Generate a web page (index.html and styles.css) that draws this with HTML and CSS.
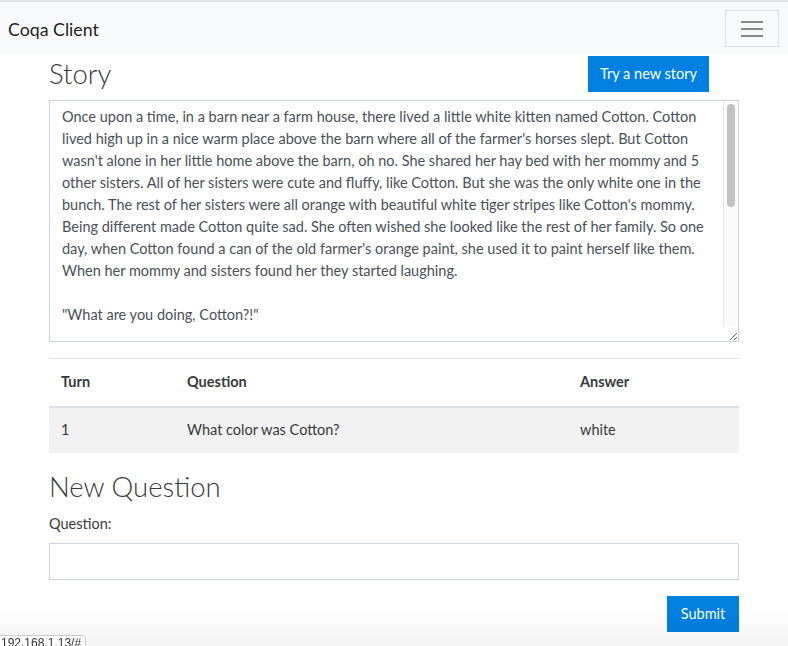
FILE: index.html
```html
<!DOCTYPE html>
<html lang="en">
<head>
<meta charset="utf-8">
<title>Coqa Client</title>
<link rel="stylesheet" href="styles.css">
</head>
<body>
<nav class="navbar">
  <span class="brand">Coqa Client</span>
  <button class="toggler" type="button" aria-label="Toggle navigation">
    <svg width="24" height="18" viewBox="0 0 24 18"><path d="M1 2h22M1 9h22M1 16h22" stroke="#888" stroke-width="2"/></svg>
  </button>
</nav>
<main class="container">
  <div class="story-head">
    <h2 class="heading">Story</h2>
    <button class="btn btn-new" type="button">Try a new story</button>
  </div>
  <div class="story-wrap">
    <textarea class="story" rows="10">Once upon a time, in a barn near a farm house, there lived a little white kitten named Cotton. Cotton lived high up in a nice warm place above the barn where all of the farmer's horses slept. But Cotton wasn't alone in her little home above the barn, oh no. She shared her hay bed with her mommy and 5 other sisters. All of her sisters were cute and fluffy, like Cotton. But she was the only white one in the bunch. The rest of her sisters were all orange with beautiful white tiger stripes like Cotton's mommy. Being different made Cotton quite sad. She often wished she looked like the rest of her family. So one day, when Cotton found a can of the old farmer's orange paint, she used it to paint herself like them. When her mommy and sisters found her they started laughing.

"What are you doing, Cotton?!"

"I only wanted to be more like you".

Cotton's mommy rubbed her face on Cotton's and said "Oh Cotton, but your fur is so pretty and special, like you. We would never want you to be any other way". And with that, Cotton's mommy picked her up and dropped her into a big bucket of water. When Cotton came out she was herself again. Her sisters licked her face until Cotton's fur was all all dry.

"Don't ever do that again, Cotton!" they all cried. "Next time you might mess up that pretty white fur of yours and we wouldn't want that!"

Then Cotton thought, "I change my mind. I like being special".</textarea>
    <div class="scrollbar" aria-hidden="true"><div class="thumb"></div></div>
  </div>
  <table class="qa">
    <thead>
      <tr><th class="c-turn">Turn</th><th class="c-q">Question</th><th>Answer</th></tr>
    </thead>
    <tbody>
      <tr><td>1</td><td>What color was Cotton?</td><td>white</td></tr>
    </tbody>
  </table>
  <h2 class="heading heading-q">New Question</h2>
  <form class="ask">
    <label class="label" for="q">Question:</label>
    <input id="q" class="input" type="text">
    <div class="actions"><button class="btn btn-submit" type="button">Submit</button></div>
  </form>
</main>
<div class="fade"></div>
<div class="status">192.168.1.13/#</div>
</body>
</html>
```
FILE: styles.css
```css
* { box-sizing: border-box; }
html, body { margin: 0; }
body {
  font-family: "Lato", "Noto Sans", sans-serif;
  font-size: 14.5px;
  line-height: 22.5px;
  color: #373a3c;
  background: #fff;
}
.navbar {
  display: flex;
  align-items: center;
  justify-content: space-between;
  background: #f8f9fa;
  border-top: 2px solid #e2e2e2;
  padding: 8px 9px 8px 8px;
}
.brand {
  font-size: 17.75px;
  color: rgba(0,0,0,.9);
  line-height: 28px;
}
.toggler {
  width: 54px;
  height: 37px;
  border: 1px solid #dedfe0;
  background: transparent;
  display: flex;
  align-items: center;
  justify-content: center;
  padding: 0;
}
.container {
  width: 690px;
  margin: 0 auto;
}
.story-head {
  display: flex;
  align-items: center;
  justify-content: space-between;
  padding-top: 1px;
  margin-bottom: 8px;
}
.heading {
  font-size: 27.5px;
  font-weight: 300;
  line-height: 36px;
  margin: 0;
  color: #373a3c;
}
.heading-q { margin-top: 2px; }
.btn {
  font-family: inherit;
  font-size: 14.5px;
  line-height: 22px;
  height: 36px;
  padding: 0;
  white-space: nowrap;
  text-align: center;
  color: #fff;
  background: #0080e0;
  border: 0;
  border-radius: 0;
}
.btn-new { margin-right: 30px; width: 121px; }
.btn-submit { width: 72px; }
.story-wrap {
  position: relative;
  margin: 0 0 16px;
}
.story {
  display: block;
  width: 100%;
  height: 242px;
  font-family: inherit;
  font-size: 14.5px;
  line-height: 22px;
  color: #495057;
  padding: 5px 27px 6px 12px;
  border: 1px solid #ced4da;
  border-radius: 0;
  margin: 0;
  resize: vertical;
  overflow: hidden;
}
.scrollbar {
  position: absolute;
  top: 1px;
  right: 1px;
  bottom: 16px;
  width: 15px;
  background: #fafafa;
  border-left: 1px solid #e8e8e8;
  padding: 3px 0 0 3px;
}
.thumb {
  width: 8px;
  height: 103px;
  border-radius: 4px;
  background: #c1c1c1;
}
.qa {
  width: 100%;
  border-collapse: collapse;
  margin-bottom: 16px;
}
.qa th, .qa td {
  text-align: left;
  padding: 12px;
  line-height: 22.5px;
  border-top: 1px solid #dee2e6;
}
.qa th { font-weight: 700; }
.qa thead th { border-bottom: 2px solid #dee2e6; }
.qa tbody tr { background: #f2f2f2; }
.qa tbody td { border-top: 0; padding: 11.25px 12px; }
.c-turn { width: 126px; }
.c-q { width: 393px; }
.ask { margin-top: 8px; }
.label {
  display: block;
  line-height: 22.5px;
  margin-bottom: 8px;
}
.input {
  display: block;
  width: 100%;
  height: 37px;
  border: 1px solid #ced4da;
  border-radius: 0;
  font-family: inherit;
  font-size: 14.5px;
  padding: 6px 12px;
}
.actions {
  display: flex;
  justify-content: flex-end;
  margin-top: 16px;
}
.fade {
  position: fixed;
  left: 0; right: 0; bottom: 0;
  height: 40px;
  background: linear-gradient(rgba(0,0,0,0), rgba(0,0,0,.045));
  pointer-events: none;
}
.status {
  position: fixed;
  left: -4px;
  bottom: -6px;
  height: 17px;
  padding: 0 4px;
  font-family: "Liberation Sans", Arial, sans-serif;
  font-size: 12px;
  line-height: 15px;
  color: #333;
  background: #fff;
  border: 1px solid #ccc;
  border-radius: 3px;
}
```
